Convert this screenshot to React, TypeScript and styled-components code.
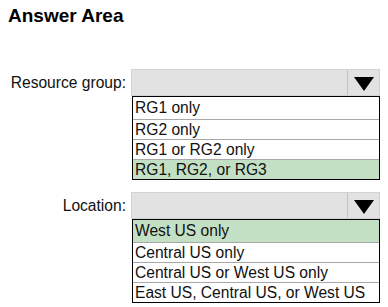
import React from "react";
import styled, { createGlobalStyle } from "styled-components";

const GlobalStyle = createGlobalStyle`
  body {
    margin: 0;
    background: #ffffff;
    font-family: "Liberation Sans", Arial, sans-serif;
    color: #111111;
  }
`;

type Choice = { label: string; options: string[]; picked: number };

const choices: Choice[] = [
  {
    label: "Resource group:",
    options: ["RG1 only", "RG2 only", "RG1 or RG2 only", "RG1, RG2, or RG3"],
    picked: 3,
  },
  {
    label: "Location:",
    options: [
      "West US only",
      "Central US only",
      "Central US or West US only",
      "East US, Central US, or West US",
    ],
    picked: 0,
  },
];

const App: React.FC = () => {
  return (
    <Page>
      <GlobalStyle />
      <StyledTitle>Answer Area</StyledTitle>
      <StyledForm>
        {choices.map((c) => (
          <StyledRow key={c.label}>
            <StyledLabel>{c.label}</StyledLabel>
            <StyledDropdown>
              <StyledSelect>
                <StyledSelectField />
                <StyledArrow>
                  <svg width="20" height="14" viewBox="0 0 20 14">
                    <polygon points="0,0 20,0 10,14" fill="#000" />
                  </svg>
                </StyledArrow>
              </StyledSelect>
              <StyledList>
                {c.options.map((o, i) => (
                  <StyledOption key={o} picked={i === c.picked} first={i === 0}>
                    {o}
                  </StyledOption>
                ))}
              </StyledList>
            </StyledDropdown>
          </StyledRow>
        ))}
      </StyledForm>
    </Page>
  );
};

const Page = styled.div`
  width: 388px;
  height: 307px;
  box-sizing: border-box;
  padding: 5px 0 0 8px;
`;

const StyledTitle = styled.h1`
  margin: 0;
  font-size: 19px;
  line-height: 22px;
  font-weight: 700;
  color: #000;
`;

const StyledForm = styled.div`
  display: flex;
  flex-direction: column;
  gap: 12px;
  margin-top: 42px;
`;

const StyledRow = styled.div`
  display: grid;
  grid-template-columns: 118px 249px;
  column-gap: 5px;
  align-items: start;
`;

const StyledLabel = styled.div`
  height: 27px;
  display: flex;
  align-items: center;
  justify-content: flex-end;
  font-size: 15.6px;
  color: #111;
`;

const StyledDropdown = styled.div`
  display: flex;
  flex-direction: column;
`;

const StyledSelect = styled.div`
  display: flex;
  height: 27px;
  box-sizing: border-box;
  border: 1px solid #d2d2d2;
  background: #e2e2e2;
`;

const StyledSelectField = styled.div`
  flex: 1;
`;

const StyledArrow = styled.div`
  width: 32px;
  border-left: 1px solid #c4c4c4;
  display: flex;
  align-items: center;
  justify-content: center;
  padding-top: 3px;
  box-sizing: border-box;
`;

const StyledList = styled.div`
  border: 1px solid #000;
  margin-left: 1px;
  display: flex;
  flex-direction: column;
`;

const StyledOption = styled.div<{ picked?: boolean; first?: boolean }>`
  height: ${({ first }) => (first ? "22px" : "19px")};
  line-height: ${({ first }) => (first ? "22px" : "19px")};
  border-top: ${({ first }) => (first ? "none" : "1px solid #a8a8a8")};
  background: ${({ picked }) => (picked ? "#c4e0c4" : "#ffffff")};
  padding-left: 2px;
  font-size: 15.6px;
  color: #111;
  white-space: nowrap;
`;

export default App;
